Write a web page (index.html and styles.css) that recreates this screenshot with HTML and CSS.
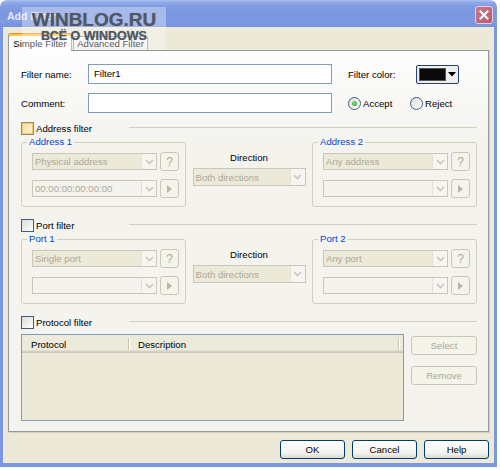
FILE: index.html
```html
<!DOCTYPE html>
<html>
<head>
<meta charset="utf-8">
<title>Add Filter</title>
<link rel="stylesheet" href="styles.css">
</head>
<body>
<div class="window">
  <div class="titlebar">
    <span class="title">Add Filter</span>
    <span class="close"><svg width="10" height="10" viewBox="0 0 10 10"><path d="M1.5 1.5L8.5 8.5M8.5 1.5L1.5 8.5" stroke="#fff" stroke-width="2" stroke-linecap="square"/></svg></span>
  </div>
  <div class="client">
    <div class="tabs">
      <div class="tab active">Simple Filter</div>
      <div class="tab">Advanced Filter</div>
    </div>
    <div class="panel">
      <div class="row">
        <span class="lbl">Filter name:</span>
        <div class="input">Filter1</div>
        <span class="lbl2">Filter color:</span>
        <div class="colorbtn"><span class="swatch"></span><svg class="tri" width="8" height="5" viewBox="0 0 8 5"><polygon points="0,0 8,0 4,4.5" fill="#000"/></svg></div>
      </div>
      <div class="row">
        <span class="lbl">Comment:</span>
        <div class="input"></div>
        <div class="radios">
          <span class="ritem first"><span class="radio on"></span>Accept</span>
          <span class="ritem"><span class="radio"></span>Reject</span>
        </div>
      </div>

      <div class="section-head">
        <span class="head-left"><span class="check hot"></span>Address filter</span>
        <span class="rule"></span>
      </div>
      <div class="groups">
        <div class="group">
          <span class="legend">Address 1</span>
          <div class="grow">
            <div class="combo fill"><span class="txt">Physical address</span><span class="arrow"><svg width="9" height="6" viewBox="0 0 9 6"><polyline points="1,1 4.5,4.5 8,1" fill="none" stroke="#C9C7BA" stroke-width="1.6"/></svg></span></div>
            <div class="sbtn">?</div>
          </div>
          <div class="grow">
            <div class="combo"><span class="txt">00:00:00:00:00:00</span><span class="arrow"><svg width="9" height="6" viewBox="0 0 9 6"><polyline points="1,1 4.5,4.5 8,1" fill="none" stroke="#C9C7BA" stroke-width="1.6"/></svg></span></div>
            <div class="sbtn"><svg width="5" height="8" viewBox="0 0 5 8"><polygon points="0,0 5,4 0,8" fill="#B8B5A8"/></svg></div>
          </div>
        </div>
        <div class="direction">
          <span>Direction</span>
          <div class="combo fill dir"><span class="txt">Both directions</span><span class="arrow"><svg width="9" height="6" viewBox="0 0 9 6"><polyline points="1,1 4.5,4.5 8,1" fill="none" stroke="#C9C7BA" stroke-width="1.6"/></svg></span></div>
        </div>
        <div class="group">
          <span class="legend">Address 2</span>
          <div class="grow">
            <div class="combo fill"><span class="txt">Any address</span><span class="arrow"><svg width="9" height="6" viewBox="0 0 9 6"><polyline points="1,1 4.5,4.5 8,1" fill="none" stroke="#C9C7BA" stroke-width="1.6"/></svg></span></div>
            <div class="sbtn">?</div>
          </div>
          <div class="grow">
            <div class="combo"><span class="txt"></span><span class="arrow"><svg width="9" height="6" viewBox="0 0 9 6"><polyline points="1,1 4.5,4.5 8,1" fill="none" stroke="#C9C7BA" stroke-width="1.6"/></svg></span></div>
            <div class="sbtn"><svg width="5" height="8" viewBox="0 0 5 8"><polygon points="0,0 5,4 0,8" fill="#B8B5A8"/></svg></div>
          </div>
        </div>
      </div>

      <div class="section-head next">
        <span class="head-left"><span class="check"></span>Port filter</span>
        <span class="rule"></span>
      </div>
      <div class="groups">
        <div class="group">
          <span class="legend">Port 1</span>
          <div class="grow">
            <div class="combo fill"><span class="txt">Single port</span><span class="arrow"><svg width="9" height="6" viewBox="0 0 9 6"><polyline points="1,1 4.5,4.5 8,1" fill="none" stroke="#C9C7BA" stroke-width="1.6"/></svg></span></div>
            <div class="sbtn">?</div>
          </div>
          <div class="grow">
            <div class="combo"><span class="txt"></span><span class="arrow"><svg width="9" height="6" viewBox="0 0 9 6"><polyline points="1,1 4.5,4.5 8,1" fill="none" stroke="#C9C7BA" stroke-width="1.6"/></svg></span></div>
            <div class="sbtn"><svg width="5" height="8" viewBox="0 0 5 8"><polygon points="0,0 5,4 0,8" fill="#B8B5A8"/></svg></div>
          </div>
        </div>
        <div class="direction">
          <span>Direction</span>
          <div class="combo fill dir"><span class="txt">Both directions</span><span class="arrow"><svg width="9" height="6" viewBox="0 0 9 6"><polyline points="1,1 4.5,4.5 8,1" fill="none" stroke="#C9C7BA" stroke-width="1.6"/></svg></span></div>
        </div>
        <div class="group">
          <span class="legend">Port 2</span>
          <div class="grow">
            <div class="combo fill"><span class="txt">Any port</span><span class="arrow"><svg width="9" height="6" viewBox="0 0 9 6"><polyline points="1,1 4.5,4.5 8,1" fill="none" stroke="#C9C7BA" stroke-width="1.6"/></svg></span></div>
            <div class="sbtn">?</div>
          </div>
          <div class="grow">
            <div class="combo"><span class="txt"></span><span class="arrow"><svg width="9" height="6" viewBox="0 0 9 6"><polyline points="1,1 4.5,4.5 8,1" fill="none" stroke="#C9C7BA" stroke-width="1.6"/></svg></span></div>
            <div class="sbtn"><svg width="5" height="8" viewBox="0 0 5 8"><polygon points="0,0 5,4 0,8" fill="#B8B5A8"/></svg></div>
          </div>
        </div>
      </div>

      <div class="section-head next">
        <span class="head-left"><span class="check"></span>Protocol filter</span>
        <span class="rule"></span>
      </div>
      <div class="proto">
        <div class="listbox">
          <div class="lhead">
            <span class="hcell c1">Protocol</span>
            <span class="hdiv"></span>
            <span class="hcell c2">Description</span>
            <span class="hdiv"></span>
          </div>
        </div>
        <div class="side">
          <div class="dbtn">Select</div>
          <div class="dbtn">Remove</div>
        </div>
      </div>
    </div>
    <div class="footer">
      <div class="btn">OK</div>
      <div class="btn">Cancel</div>
      <div class="btn">Help</div>
    </div>
  </div>
  <div class="watermark">
    <div class="wm1">WINBLOG.RU</div>
    <div class="wm2">ВСЁ О WINDOWS</div>
  </div>
</div>
</body>
</html>
```
FILE: styles.css
```css
* { box-sizing: border-box; }
html, body { margin: 0; padding: 0; }
body {
  width: 500px;
  height: 470px;
  overflow: hidden;
  background: #ffffff;
  font-family: "Liberation Sans", Arial, sans-serif;
  font-size: 9.6px;
  color: #000;
}
.window {
  position: relative;
  width: 497px;
  height: 467px;
  display: flex;
  flex-direction: column;
}
.titlebar {
  flex: none;
  height: 27px;
  display: flex;
  justify-content: space-between;
  align-items: flex-start;
  padding: 0 4px 0 7px;
  border-radius: 7px 7px 0 0;
  background: linear-gradient(#AFC2F2 0px, #93ABEA 2px, #819CE2 6px, #7B97E0 50%, #7E9AE3 82%, #7690DB 100%);
}
.title {
  margin-top: 10px;
  color: #E2E9FA;
  font-weight: bold;
  font-size: 10.5px;
  line-height: 12px;
}
.close {
  margin-top: 6px;
  width: 18px;
  height: 18px;
  border: 1px solid #E9CDD6;
  border-radius: 3px;
  background: linear-gradient(135deg, #C97A8E, #B45A74);
  display: flex;
  align-items: center;
  justify-content: center;
}
.client {
  flex: 1;
  background: #ECE9D8;
  border: 3px solid #7B97E0;
  border-top: 0;
  border-bottom-width: 4px;
  padding: 6px 5px 0 5px;
  display: flex;
  flex-direction: column;
}
.tabs {
  flex: none;
  height: 17px;
  display: flex;
  align-items: flex-end;
  position: relative;
  z-index: 1;
}
.tab {
  height: 14px;
  width: 75px;
  margin-left: 1px;
  border: 1px solid #919B9C;
  border-bottom: 0;
  border-radius: 3px 3px 0 0;
  background: linear-gradient(#FFFFFF, #ECEBE6);
  text-align: center;
  line-height: 13px;
  white-space: nowrap;
}
.tab.active {
  width: 64px;
  height: 18px;
  margin-left: 0;
  margin-bottom: -1px;
  border-top: 1px solid #E68B2C;
  box-shadow: inset 0 2px 0 #FFC83C;
  background: #FCFCFE;
  line-height: 17px;
  padding-top: 1px;
}
.panel {
  flex: none;
  height: 382px;
  border: 1px solid #919B9C;
  box-shadow: 1px 1px 0 #D4D0C0;
  background: linear-gradient(#FDFDFD 0px, #F4F3EE 92px, #F4F3EE 100%);
  padding: 13px 11px 0 12px;
  display: flex;
  flex-direction: column;
}
.row {
  display: flex;
  align-items: center;
  height: 20px;
}
.row + .row { margin-top: 9px; }
.lbl { width: 67px; flex: none; }
.lbl2 { width: 68px; margin-left: 16px; flex: none; }
.input {
  width: 244px;
  height: 20px;
  flex: none;
  border: 1px solid #7F9DB9;
  background: #fff;
  padding-left: 5px;
  line-height: 18px;
}
.colorbtn {
  width: 43px;
  height: 19px;
  border: 1px solid #23416F;
  border-radius: 2px;
  background: #EEEEEA;
  display: flex;
  align-items: center;
  padding-left: 2px;
  gap: 2px;
}
.swatch {
  width: 27px;
  height: 13px;
  background: #0A0A0A;
  border: 1px solid #555;
}
.radios {
  display: flex;
  align-items: center;
  margin-left: 16px;
}
.ritem {
  display: flex;
  align-items: center;
  gap: 2px;
}
.ritem.first { width: 62px; }
.radio {
  width: 13px;
  height: 13px;
  border-radius: 50%;
  border: 1px solid #3D5E87;
  background: linear-gradient(135deg, #DCDCD7, #FFFFFF);
  display: flex;
  align-items: center;
  justify-content: center;
}
.radio.on::after {
  content: "";
  width: 5px;
  height: 5px;
  border-radius: 50%;
  background: radial-gradient(circle at 40% 40%, #7BE07A, #21A121);
}
.section-head {
  display: grid;
  grid-template-columns: 108px 1fr;
  height: 13px;
  margin-top: 9px;
}
.section-head.next { margin-top: 12px; }
.head-left {
  display: flex;
  align-items: center;
  gap: 2px;
  white-space: nowrap;
}
.rule {
  height: 1px;
  margin-top: 5px;
  background: #D0D0BF;
}
.check {
  width: 13px;
  height: 13px;
  flex: none;
  border: 1px solid #3D5E87;
  background: linear-gradient(135deg, #DCDCD7, #FFFFFF);
}
.check.hot {
  border-color: #8F8C7A;
  background: linear-gradient(135deg, #F6DDA2, #FFF3D6);
  box-shadow: inset 0 0 0 1px #F3C86A;
}
.groups {
  display: grid;
  grid-template-columns: 165px 126px 165px;
  margin-top: 7px;
}
.group {
  position: relative;
  height: 65px;
  border: 1px solid #D0D0BF;
  border-radius: 3px;
  padding: 9px 6px 0 10px;
  display: flex;
  flex-direction: column;
  gap: 8px;
}
.legend {
  position: absolute;
  top: -7px;
  left: 5px;
  padding: 0 2px;
  background: #F5F4EF;
  color: #0046D5;
  line-height: 12px;
}
.grow {
  display: flex;
  align-items: center;
  gap: 3px;
  height: 19px;
}
.combo {
  flex: none;
  width: 125px;
  height: 17px;
  border: 1px solid #C9C7BA;
  background: #F4F3EE;
  color: #ACA899;
  display: flex;
  align-items: center;
  padding-left: 2px;
}
.combo.fill { background: #ECE9D8; }
.combo.dir { width: 113px; height: 18px; }
.txt {
  flex: 1;
  white-space: nowrap;
  overflow: hidden;
}
.arrow {
  width: 15px;
  height: 100%;
  background: #F6F5F1;
  border-left: 1px solid #E4E2D8;
  display: flex;
  align-items: center;
  justify-content: center;
}
.sbtn {
  width: 19px;
  height: 19px;
  flex: none;
  border: 1px solid #C9C7BA;
  border-radius: 3px;
  background: #F5F4EA;
  color: #ACA899;
  font-size: 12px;
  display: flex;
  align-items: center;
  justify-content: center;
}
.direction {
  display: flex;
  flex-direction: column;
  align-items: center;
  padding-top: 10px;
  gap: 4px;
}
.direction > span { line-height: 12px; }
.proto {
  display: flex;
  gap: 7px;
  margin-top: 5px;
}
.listbox {
  width: 383px;
  height: 87px;
  border: 1px solid #7F9DB9;
  background: #ECE9D8;
}
.lhead {
  height: 18px;
  display: flex;
  align-items: center;
  background: #EBEADB;
  box-shadow: inset 0 -1px 0 #CBC7B8, inset 0 -2px 0 #D6D2C2, inset 0 -3px 0 #E2DED1;
}
.hcell { padding-left: 9px; white-space: nowrap; }
.hcell.c1 { width: 106px; }
.hcell.c2 { width: 268px; padding-left: 8px; }
.hdiv {
  width: 2px;
  height: 12px;
  border-left: 1px solid #C7C5B2;
  border-right: 1px solid #FFFFFF;
}
.side {
  display: flex;
  flex-direction: column;
  gap: 11px;
  padding-top: 2px;
}
.dbtn {
  width: 66px;
  height: 19px;
  border: 1px solid #C9C7BA;
  border-radius: 3px;
  background: #F5F4EA;
  color: #ACA899;
  display: flex;
  align-items: center;
  justify-content: center;
}
.footer {
  display: flex;
  justify-content: flex-end;
  gap: 7px;
  margin-top: 8px;
}
.btn {
  width: 65px;
  height: 19px;
  border: 1px solid #003C74;
  border-radius: 3px;
  background: linear-gradient(#FFFFFF, #F3F3EF 70%, #DCD8CC);
  display: flex;
  align-items: center;
  justify-content: center;
}
.watermark {
  position: absolute;
  left: 22px;
  top: 7px;
  width: 144px;
  height: 43px;
  padding-top: 3px;
  background: rgba(255, 255, 255, 0.33);
  text-align: center;
  font-weight: bold;
  color: #4F5765;
  text-shadow: 0 0 1px rgba(80, 88, 100, 0.6);
  z-index: 5;
}
.wm1 { font-size: 19px; line-height: 20px; }
.wm2 { font-size: 12.5px; line-height: 13px; }
```
